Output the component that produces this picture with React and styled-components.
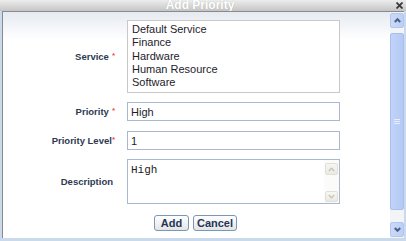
import React from "react";
import styled, { createGlobalStyle } from "styled-components";

const Global = createGlobalStyle`
  html, body { margin: 0; padding: 0; width: 406px; height: 241px; overflow: hidden; background: #fff; }
  * { box-sizing: border-box; }
`;

const Frame = styled.div`
  width: 406px;
  height: 241px;
  background: #cbd9ec;
  display: flex;
  flex-direction: column;
  font-family: "Liberation Sans", Arial, sans-serif;
`;

const TitleBar = styled.div`
  height: 11px;
  flex-shrink: 0;
  display: flex;
  align-items: flex-start;
  background: linear-gradient(#ededed, #c5c5c5);
  overflow: hidden;
`;

const Title = styled.div`
  flex: 1;
  text-align: center;
  color: #fff;
  font-weight: bold;
  font-size: 12px;
  line-height: 11px;
  padding-left: 4px;
  text-shadow: 0 0 1px rgba(90, 90, 90, 0.35);
`;

const Close = styled.div`
  width: 7px;
  height: 7px;
  margin: 2px 3px 0 0;
  display: flex;
`;

const Body = styled.div`
  flex: 1;
  display: flex;
  margin: 0 2px 3px 2px;
  border-top: 1px solid #8a8a8a;
  border-left: 1px solid #8a8a8a;
  background: linear-gradient(#e6ebf1 0px, #ffffff 28px);
  min-height: 0;
`;

const Form = styled.div`
  flex: 1;
  display: flex;
  flex-direction: column;
  padding-top: 8px;
`;

const Row = styled.div`
  display: grid;
  grid-template-columns: 112px 213px;
  column-gap: 12px;
  align-items: center;
  margin-top: ${(p) => p.$top || 0}px;
`;

const Label = styled.div`
  text-align: right;
  font-weight: bold;
  font-size: 9.5px;
  color: #2e3a52;
  padding-right: ${(p) => p.$pr || 0}px;
  white-space: nowrap;
`;

const Star = styled.span`
  color: #f0504a;
  font-size: 8px;
  vertical-align: 2px;
  margin-left: ${(p) => (p.$space ? 3 : 0)}px;
`;

const ListBox = styled.div`
  height: 73px;
  border: 1px solid #c9c9c9;
  background: #fff;
  padding: 2px 4px;
`;

const Option = styled.div`
  font-size: 11px;
  line-height: 13.3px;
  color: #231c2c;
  white-space: nowrap;
`;

const Input = styled.input`
  height: 19px;
  width: 213px;
  border: 1px solid #a7b9d2;
  background: #fff;
  padding: 0 3px;
  margin: 0;
  font-family: "Liberation Sans", Arial, sans-serif;
  font-size: 11px;
  color: #231c2c;
  outline: none;
`;

const TextBox = styled.div`
  height: 45px;
  border: 1px solid #a7b9d2;
  background: #fff;
  display: flex;
`;

const TextContent = styled.div`
  flex: 1;
  padding: 4px 3px;
  font-family: "Liberation Mono", "Courier New", monospace;
  font-size: 11px;
  line-height: 13px;
  color: #222;
`;

const MiniBar = styled.div`
  width: 15px;
  display: flex;
  flex-direction: column;
  padding: 3px 0 1px 0;
  background: #fbfbf9;
`;

const MiniBtn = styled.div`
  height: ${(p) => p.$h}px;
  margin: 0 1px;
  border: 1px solid #e2e0d6;
  border-radius: 2px;
  background: linear-gradient(#f7f6f1, #ebe9e1);
  display: flex;
  align-items: center;
  justify-content: center;
`;

const Spacer = styled.div`
  flex: 1;
`;

const ButtonRow = styled.div`
  display: flex;
  justify-content: center;
  gap: 4px;
  margin-top: 11px;
  padding-right: 2px;
`;

const Button = styled.div`
  height: 16px;
  width: ${(p) => p.$w}px;
  border: 1px solid #7997b8;
  border-radius: 3px;
  background: linear-gradient(#ffffff, #e4e4e4);
  font-weight: bold;
  font-size: 11px;
  color: #1e3658;
  display: flex;
  align-items: center;
  justify-content: center;
`;

const ScrollBar = styled.div`
  width: 14px;
  display: flex;
  flex-direction: column;
  background: #f2f4f8;
  padding: 1px 0 1px 0;
`;

const ArrowBtn = styled.div`
  height: 15px;
  border: 1px solid #b3c6ee;
  border-radius: 2px;
  background: linear-gradient(90deg, #cbd9f8, #bccff6);
  display: flex;
  align-items: center;
  justify-content: center;
`;

const Thumb = styled.div`
  height: 177px;
  margin-top: 5px;
  border: 1px solid #a9bfea;
  border-radius: 2px;
  background: linear-gradient(90deg, #c1d3f8, #b4c9f5);
  display: flex;
  align-items: center;
  justify-content: center;
`;

const Grip = styled.div`
  width: 6px;
  height: 5px;
  background: repeating-linear-gradient(#e6eefe 0 1px, transparent 1px 2px);
`;

const Chevron = ({ up, color, w = 7, sw = 2 }) => (
  <svg width={w} height="5" viewBox="0 0 7 5">
    <polyline
      points={up ? "0.8,4 3.5,1.2 6.2,4" : "0.8,1 3.5,3.8 6.2,1"}
      fill="none"
      stroke={color}
      strokeWidth={sw}
    />
  </svg>
);

export default function App() {
  const services = ["Default Service", "Finance", "Hardware", "Human Resource", "Software"];
  return (
    <>
      <Global />
      <Frame>
        <TitleBar>
          <Title>Add Priority</Title>
          <Close>
            <svg width="7" height="7" viewBox="0 0 7 7">
              <path d="M0.5 0.5 L6.5 6.5 M6.5 0.5 L0.5 6.5" stroke="#3a3a3a" strokeWidth="1.8" />
            </svg>
          </Close>
        </TitleBar>
        <Body>
          <Form>
            <Row>
              <Label>
                Service<Star $space>*</Star>
              </Label>
              <ListBox>
                {services.map((s) => (
                  <Option key={s}>{s}</Option>
                ))}
              </ListBox>
            </Row>
            <Row $top={9}>
              <Label>
                Priority<Star $space>*</Star>
              </Label>
              <Input readOnly value="High" />
            </Row>
            <Row $top={10}>
              <Label>
                Priority Level<Star>*</Star>
              </Label>
              <Input readOnly value="1" />
            </Row>
            <Row $top={9}>
              <Label $pr={2}>Description</Label>
              <TextBox>
                <TextContent>High</TextContent>
                <MiniBar>
                  <MiniBtn $h={12}>
                    <Chevron up color="#c4c4c0" sw={1.4} />
                  </MiniBtn>
                  <Spacer />
                  <MiniBtn $h={11}>
                    <Chevron color="#c4c4c0" sw={1.4} />
                  </MiniBtn>
                </MiniBar>
              </TextBox>
            </Row>
            <ButtonRow>
              <Button $w={35}>Add</Button>
              <Button $w={44}>Cancel</Button>
            </ButtonRow>
          </Form>
          <ScrollBar>
            <ArrowBtn>
              <Chevron up color="#4c5f84" />
            </ArrowBtn>
            <Thumb>
              <Grip />
            </Thumb>
            <Spacer />
            <ArrowBtn>
              <Chevron color="#4c5f84" />
            </ArrowBtn>
          </ScrollBar>
        </Body>
      </Frame>
    </>
  );
}
